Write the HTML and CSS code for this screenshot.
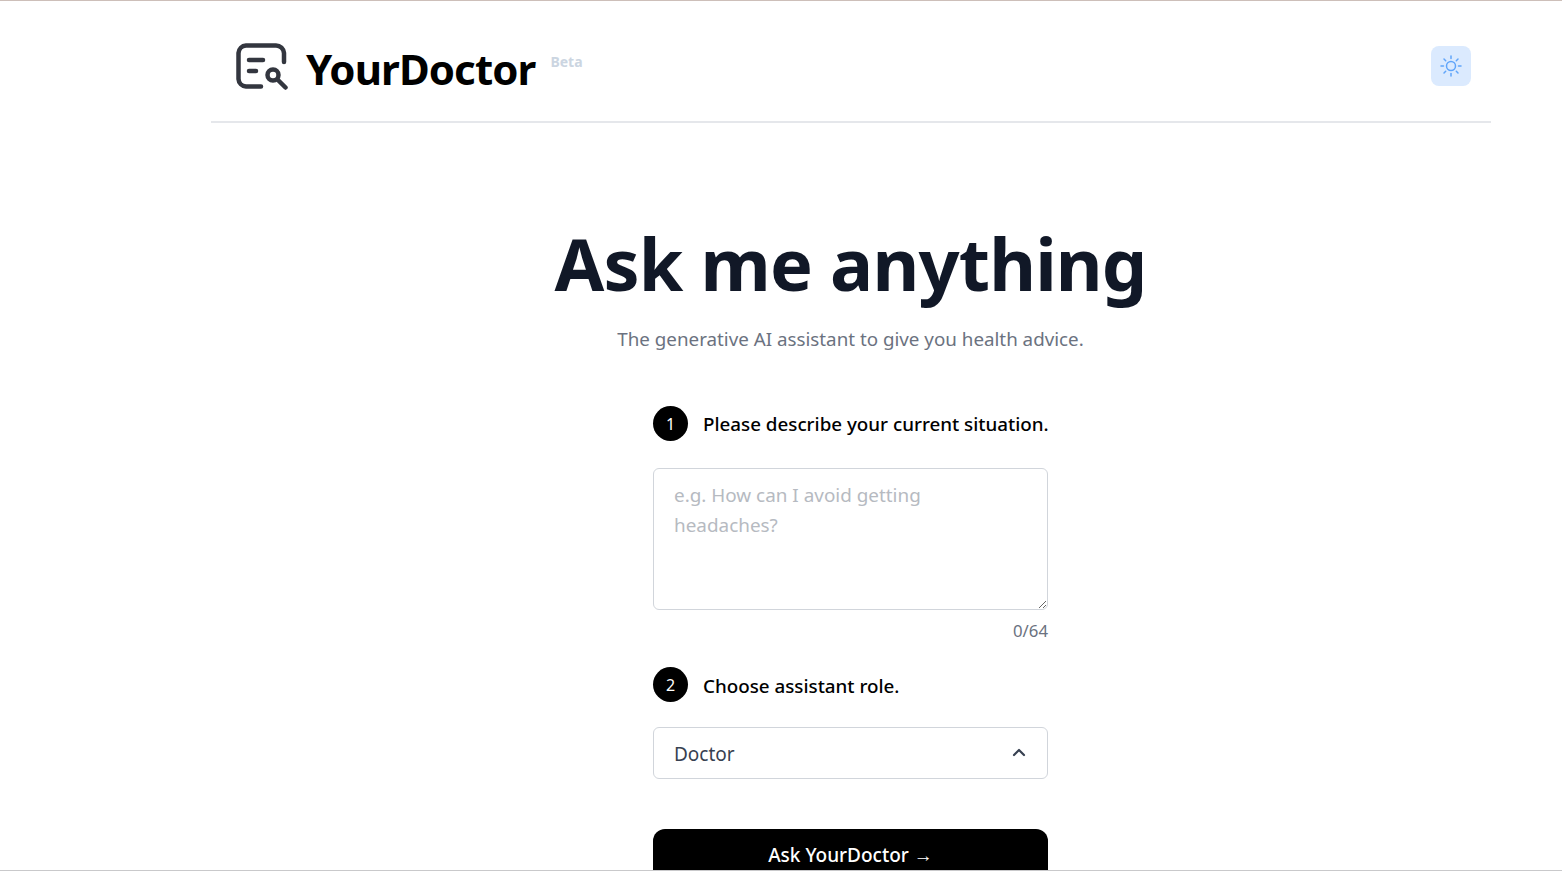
FILE: index.html
```html
<!DOCTYPE html>
<html lang="en">
<head>
    <meta charset="UTF-8">
    <meta name="viewport" content="width=device-width, initial-scale=1.0">
    <title>YourDoctor</title>
    <link rel="stylesheet" href="styles.css">
</head>
<body>
    <div class="page">
        <header class="site-header">
            <div class="brand">
                <svg class="brand-icon" xmlns="http://www.w3.org/2000/svg" viewBox="0 0 52 48" fill="none" stroke="#33363f" stroke-width="4.5" stroke-linecap="round" stroke-linejoin="round">
                    <path d="M48 19V10A8 8 0 0 0 40 2.500H10A8 8 0 0 0 2.500 10V36A8 8 0 0 0 10 43.500H25"></path>
                    <line x1="13" y1="17" x2="27" y2="17"></line>
                    <line x1="13" y1="28" x2="20" y2="28"></line>
                    <circle cx="37" cy="32" r="5.500"></circle>
                    <line x1="42" y1="37" x2="49.500" y2="44.500"></line>
                </svg>
                <span class="brand-name">YourDoctor</span>
                <span class="beta">Beta</span>
            </div>
            <button class="theme-button" aria-label="Toggle theme">
                <svg class="sun" xmlns="http://www.w3.org/2000/svg" viewBox="0 0 24 24" fill="none" stroke="currentColor" stroke-width="1.5" stroke-linecap="round">
                    <circle cx="12" cy="12" r="4.5"></circle>
                    <line x1="12" y1="2" x2="12" y2="4.5"></line>
                    <line x1="12" y1="19.5" x2="12" y2="22"></line>
                    <line x1="2" y1="12" x2="4.5" y2="12"></line>
                    <line x1="19.5" y1="12" x2="22" y2="12"></line>
                    <line x1="5" y1="5" x2="6.7" y2="6.7"></line>
                    <line x1="17.3" y1="17.3" x2="19" y2="19"></line>
                    <line x1="5" y1="19" x2="6.7" y2="17.3"></line>
                    <line x1="17.3" y1="6.7" x2="19" y2="5"></line>
                </svg>
            </button>
        </header>

        <main class="hero">
            <h1>Ask me anything</h1>
            <p class="subtitle">The generative AI assistant to give you health advice.</p>

            <form class="ask-form">
                <div class="step">
                    <span class="step-number">1</span>
                    <span class="step-label">Please describe your current situation.</span>
                </div>
                <textarea class="question" placeholder="e.g. How can I avoid getting headaches?"></textarea>
                <div class="counter">0/64</div>

                <div class="step step-role">
                    <span class="step-number">2</span>
                    <span class="step-label">Choose assistant role.</span>
                </div>
                <div class="select">
                    <span class="select-value">Doctor</span>
                    <svg class="chevron" xmlns="http://www.w3.org/2000/svg" viewBox="0 0 16 10" fill="none" stroke="#374151" stroke-width="2.2" stroke-linecap="round" stroke-linejoin="round">
                        <polyline points="3,8 8,3 13,8"></polyline>
                    </svg>
                </div>
                <button class="ask-button" type="button">Ask YourDoctor &rarr;</button>
            </form>
        </main>
    </div>
</body>
</html>
```

FILE: styles.css
```css
* {
    margin: 0;
    padding: 0;
    box-sizing: border-box;
}

html, body {
    height: 100%;
    overflow: hidden;
}

body {
    font-family: "Noto Sans", "Open Sans", Arial, sans-serif;
    background: white;
    color: #111827;
}

.page {
    height: 871px;
    overflow: hidden;
    border-top: 1px solid #cdbfb9;
    border-bottom: 1px solid #c9c9cb;
}

.site-header {
    width: 1280px;
    height: 122px;
    margin-left: 211px;
    padding: 42px 20px 0 25px;
    display: flex;
    justify-content: space-between;
    align-items: flex-start;
    border-bottom: 2px solid #e5e7eb;
}

.brand {
    display: flex;
    align-items: flex-start;
}

.brand-icon {
    width: 52px;
    height: 48px;
}

.brand-name {
    margin: -1px 0 0 18px;
    font-size: 42px;
    font-weight: 700;
    line-height: 54px;
    letter-spacing: -0.9px;
    color: #000;
}

.beta {
    margin: 9px 0 0 15px;
    font-size: 14px;
    font-weight: 700;
    line-height: 20px;
    color: #cbd5e1;
}

.theme-button {
    width: 40px;
    height: 40px;
    margin-top: 3px;
    display: flex;
    align-items: center;
    justify-content: center;
    border: none;
    border-radius: 8px;
    background: #dbeafe;
    color: #60a5fa;
}

.sun {
    width: 24px;
    height: 24px;
}

.hero {
    width: 1279px;
    margin-left: 211px;
    display: flex;
    flex-direction: column;
    align-items: center;
}

h1 {
    margin-top: 95px;
    font-size: 72px;
    font-weight: 700;
    line-height: 90px;
    letter-spacing: -0.8px;
    color: #111827;
}

.subtitle {
    margin-top: 17px;
    font-size: 18.800px;
    line-height: 28px;
    color: #6b7280;
}

.ask-form {
    width: 395px;
    margin-top: 52px;
}

.step {
    display: flex;
    align-items: center;
    gap: 15px;
    height: 36px;
}

.step-number {
    flex-shrink: 0;
    width: 35px;
    height: 35px;
    padding-top: 2px;
    display: flex;
    align-items: center;
    justify-content: center;
    border-radius: 50%;
    background: #000;
    color: white;
    font-size: 16px;
}

.step-label {
    margin-top: 1px;
    font-size: 18.800px;
    font-weight: 500;
    white-space: nowrap;
    color: #000;
}

.step-role .step-label {
    margin-top: 3px;
}

.question {
    display: block;
    width: 100%;
    height: 142px;
    margin-top: 27px;
    padding: 11px 20px;
    border: 1px solid #d1d5db;
    border-radius: 6px;
    font-family: inherit;
    font-size: 18.900px;
    line-height: 30px;
    color: #374151;
    outline: none;
}

.question::placeholder {
    color: #b6bac1;
}

.counter {
    margin-top: 9px;
    text-align: right;
    font-size: 16.800px;
    line-height: 24px;
    color: #6b7280;
}

.step-role {
    margin-top: 23px;
}

.select {
    height: 52px;
    margin-top: 25px;
    padding: 0 20px;
    display: flex;
    align-items: center;
    justify-content: space-between;
    border: 1px solid #d1d5db;
    border-radius: 6px;
    font-size: 19px;
    color: #374151;
}

.select-value {
    margin-top: 2px;
}

.chevron {
    width: 16px;
    height: 10px;
    margin-top: -3px;
}

.ask-button {
    display: block;
    width: 100%;
    height: 52px;
    margin-top: 50px;
    border: none;
    border-radius: 12px;
    background: #000;
    color: white;
    font-family: inherit;
    font-size: 19px;
    font-weight: 500;
}
```
